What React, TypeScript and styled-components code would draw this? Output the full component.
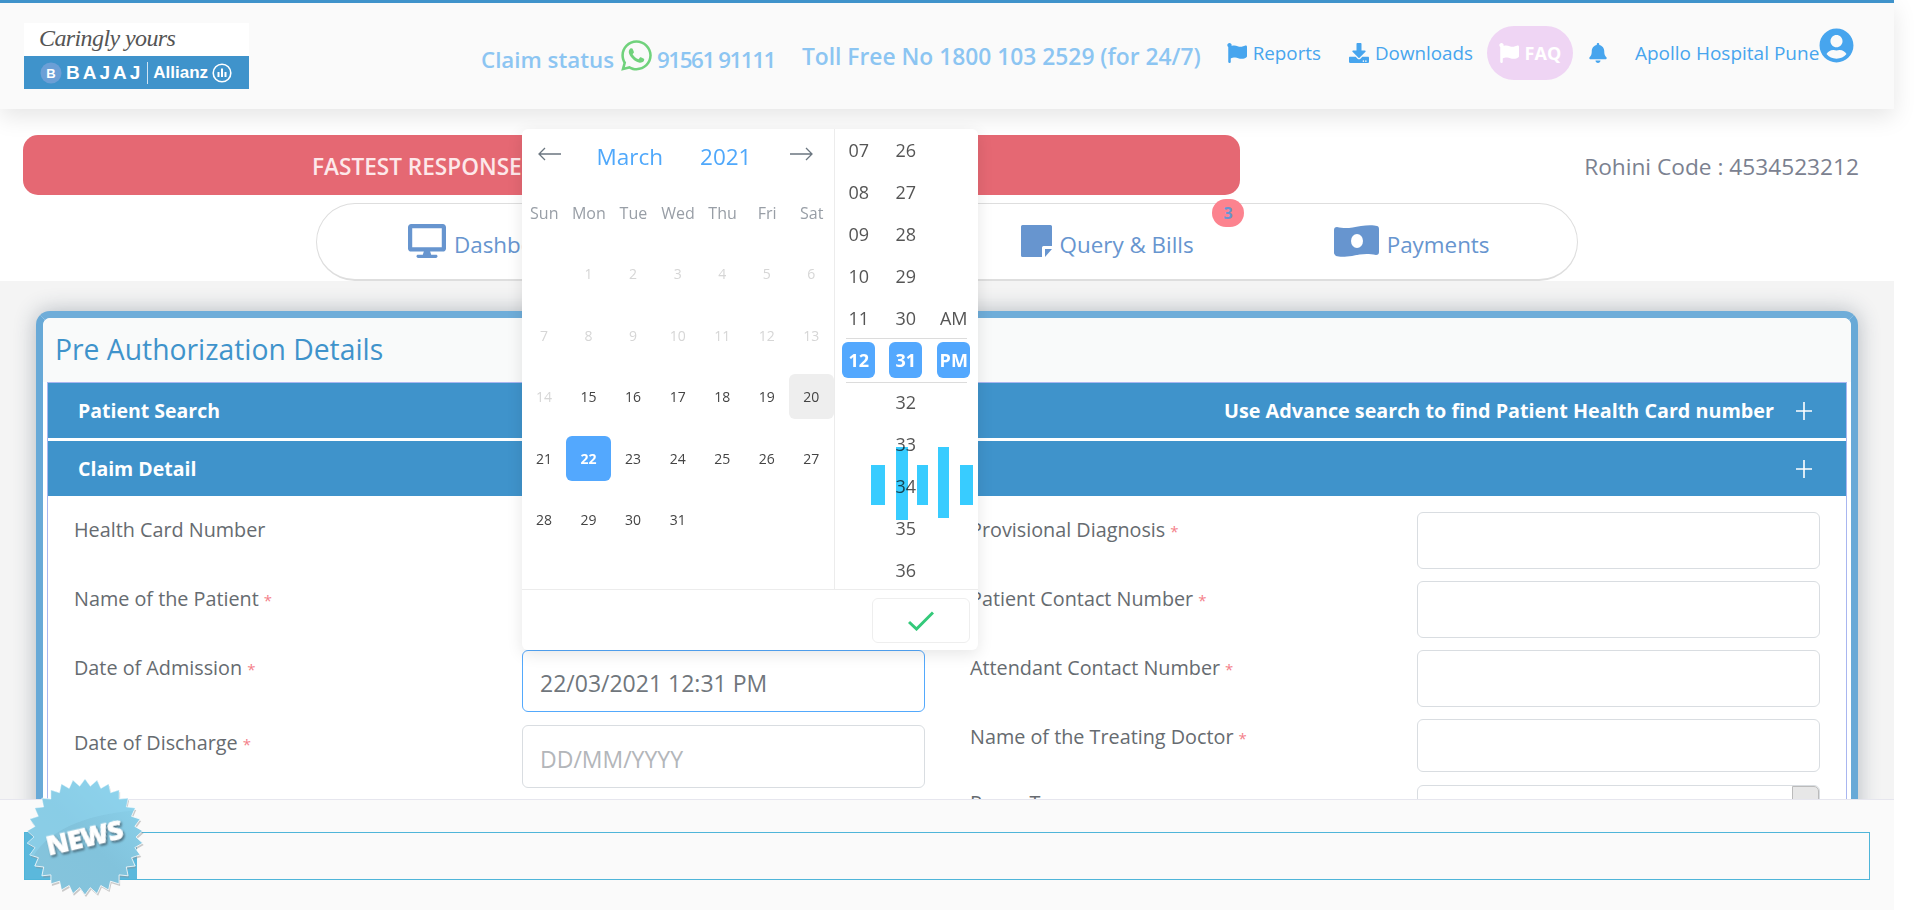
import React from "react";
import styled, { createGlobalStyle } from "styled-components";
import {
  FaBell,
  FaDesktop,
  FaDownload,
  FaFlag,
  FaUserCircle,
  FaWhatsapp,
} from "react-icons/fa";

const GlobalStyle = createGlobalStyle`
  html, body {
    margin: 0;
    height: 910px;
    overflow: hidden;
    background: #fff;
    font-family: "Open Sans", "Noto Sans", sans-serif;
  }
  * { box-sizing: border-box; }
`;

const Page = styled.div`
  position: relative;
  width: 1894px;
  height: 910px;
  overflow: visible;
`;

/* ---------- header ---------- */
const Header = styled.header`
  position: relative;
  z-index: 2;
  display: flex;
  height: 109px;
  padding: 20px 0 0 24px;
  background: #fafafa;
  border-top: 3px solid #3f93cb;
  box-shadow: 0 8px 22px rgba(0, 0, 0, 0.1);
`;

const Logo = styled.div`
  display: flex;
  flex-direction: column;
  flex-shrink: 0;
  width: 225px;
  height: 66px;
  background: #fff;
`;

const LogoScript = styled.div`
  height: 33px;
  padding-left: 15px;
  font: italic 24px/30px "Liberation Serif", serif;
  letter-spacing: -0.6px;
  color: #555;
`;

const LogoBar = styled.div`
  display: flex;
  align-items: center;
  height: 33px;
  padding-left: 16px;
  gap: 4px;
  background: #3f93cb;
  color: #fff;
  font-family: "Liberation Sans", sans-serif;
  font-weight: 700;
`;

const LogoBajaj = styled.span`
  font-size: 19px;
  letter-spacing: 3px;
  padding-right: 4px;
  border-right: 1px solid #cfe4f3;
  line-height: 22px;
`;

const LogoAllianz = styled.span`
  font-size: 17px;
  margin-left: 1px;
`;

const ContactText = styled.div<{ $left: number; $top: number; $size: number }>`
  display: flex;
  align-items: center;
  flex-shrink: 0;
  gap: 6px;
  margin-left: ${(p) => p.$left}px;
  margin-top: ${(p) => p.$top}px;
  height: 34px;
  font-size: ${(p) => p.$size}px;
  font-weight: 600;
  color: #8cc5f2;
  white-space: nowrap;
  & svg {
    color: #70d27c;
    font-size: 35px;
    margin-top: -7px;
    margin-left: -1px;
  }
`;

const PhoneNumber = styled.span`
  margin-left: -3px;
  letter-spacing: -1.4px;
`;

const HeaderLink = styled.a<{ $left: number }>`
  display: flex;
  align-items: center;
  flex-shrink: 0;
  gap: 6px;
  margin-left: ${(p) => p.$left}px;
  margin-top: 13px;
  height: 34px;
  font-size: 18.8px;
  color: #47a5ee;
  white-space: nowrap;
  & svg {
    font-size: 20px;
  }
`;

const FaqPill = styled.a`
  display: flex;
  align-items: center;
  justify-content: center;
  flex-shrink: 0;
  gap: 6px;
  width: 86px;
  height: 54px;
  margin-left: 14px;
  margin-top: 3px;
  border-radius: 27px;
  background: #efd5f4;
  color: #fff;
  font-size: 18px;
  font-weight: 700;
  & svg {
    font-size: 20px;
  }
`;

const UserName = styled.a`
  display: flex;
  align-items: flex-start;
  flex-shrink: 0;
  margin-left: 27px;
  margin-top: 5px;
  font-size: 19px;
  line-height: 50px;
  color: #47a5ee;
  white-space: nowrap;
  & svg {
    font-size: 35px;
    margin-top: 0;
  }
`;

/* ---------- top area ---------- */
const TopArea = styled.section`
  height: 172px;
  padding: 26px 35px 0 23px;
  background: #fff;
`;

const AlertRow = styled.div`
  display: flex;
  align-items: center;
  justify-content: space-between;
`;

const AlertBar = styled.div`
  width: 1217px;
  height: 60px;
  padding-left: 289px;
  border-radius: 15px;
  background: #e56873;
  color: #fde8ea;
  font-size: 22.6px;
  font-weight: 600;
  line-height: 63px;
`;

const RohiniCode = styled.div`
  padding-top: 2px;
  font-size: 22.7px;
  color: #7b8190;
`;

const NavPill = styled.nav`
  position: relative;
  display: flex;
  align-items: center;
  gap: 140px;
  width: 1262px;
  height: 78px;
  margin: 8px 0 0 293px;
  padding: 6px 0 0 91px;
  border: 1px solid #dedede;
  border-bottom-width: 2px;
  border-radius: 40px;
  background: #fff;
`;

const NavItem = styled.a`
  display: flex;
  align-items: center;
  gap: 8px;
  font-size: 22.4px;
  color: #6795cf;
  white-space: nowrap;
  & > svg {
    flex-shrink: 0;
    margin-top: -8px;
  }
`;

const DesktopIcon = styled(FaDesktop)`
  font-size: 38px;
`;

const NavSpacer = styled.div`
  width: 171px;
`;

const NavBadge = styled.span`
  position: absolute;
  left: 895px;
  top: -5px;
  width: 32px;
  height: 28px;
  border-radius: 14px;
  background: #fc838f;
  color: #6795cf;
  font-size: 16px;
  font-weight: 700;
  line-height: 28px;
  text-align: center;
`;

/* ---------- main panel ---------- */
const GrayArea = styled.main`
  height: 629px;
  padding: 30px 36px 0;
  background: #f4f4f4;
  overflow: hidden;
`;

const Panel = styled.div`
  width: 1822px;
  height: 640px;
  border: 7px solid #68a9d7;
  border-top-color: #6fadd9;
  border-radius: 14px;
  background: #fff;
  box-shadow: 0 0 22px rgba(40, 60, 80, 0.32);
`;

const PanelTitle = styled.h2`
  margin: 0;
  height: 64px;
  padding: 11px 0 0 12px;
  border-radius: 8px 8px 0 0;
  background: #f9fafa;
  font-size: 28.3px;
  font-weight: 400;
  line-height: 40px;
  color: #3f93cb;
`;

const Accordion = styled.div`
  margin: 0 4px;
  height: 100%;
  border: 1px solid #a9b6f0;
  border-bottom: 0;
  background: #fff;
`;

const AccordionHead = styled.div<{ $gap?: boolean }>`
  display: flex;
  align-items: center;
  justify-content: space-between;
  height: 55px;
  padding: 0 34px 0 30px;
  margin-bottom: ${(p) => (p.$gap ? 3 : 0)}px;
  background: #3f93cb;
  color: #fff;
  font-size: 19.5px;
  font-weight: 700;
`;

const HeadRight = styled.div`
  display: flex;
  align-items: center;
  gap: 22px;
  font-size: 19.75px;
`;

const PlusIcon = styled.svg`
  width: 16px;
  height: 18px;
  stroke: #fff;
  stroke-width: 1.6;
`;

const FormGrid = styled.div`
  display: grid;
  grid-template-columns: 851px 850px;
  column-gap: 45px;
  padding: 16px 26px 0;
`;

const FormColumn = styled.div`
  display: flex;
  flex-direction: column;
`;

const FormRow = styled.div<{ $gap?: number }>`
  display: flex;
  justify-content: space-between;
  margin-bottom: ${(p) => p.$gap ?? 12}px;
`;

const FieldLabel = styled.label`
  font-size: 19.8px;
  line-height: 36px;
  color: #666b70;
`;

const Required = styled.span`
  margin-left: 5px;
  font-size: 15px;
  color: #f47f8a;
`;

const Field = styled.div<{ $h: number; $focus?: boolean; $muted?: boolean }>`
  position: relative;
  width: 403px;
  height: ${(p) => p.$h}px;
  padding-left: 17px;
  border: 1px solid ${(p) => (p.$focus ? "#54a9fc" : "#d9dde1")};
  border-radius: 6px;
  background: #fff;
  font-size: 23px;
  line-height: ${(p) => p.$h + 3}px;
  color: ${(p) => (p.$muted ? "#b3b6ba" : "#70767c")};
`;

const SelectArrow = styled.span`
  position: absolute;
  right: 0;
  top: 0;
  width: 27px;
  height: 100%;
  background: #e7e7e7;
  border: 1px solid #bbb;
  border-radius: 0 5px 5px 0;
`;

/* ---------- date picker ---------- */
const Picker = styled.div`
  position: absolute;
  z-index: 3;
  left: 522px;
  top: 129px;
  width: 456px;
  height: 521px;
  border-radius: 6px;
  background: #fff;
  box-shadow: 0 4px 16px rgba(0, 0, 0, 0.1);
  overflow: hidden;
`;

const PickerBody = styled.div`
  display: flex;
  height: 461px;
  border-bottom: 1px solid #ececec;
`;

const Calendar = styled.div`
  width: 312px;
`;

const CalendarHead = styled.div`
  display: flex;
  align-items: center;
  height: 54px;
  padding: 0 21px 0 16px;
  font-size: 22.5px;
  color: #4fa8fb;
`;

const CalendarTitle = styled.div`
  display: flex;
  flex: 1;
  justify-content: center;
  gap: 37px;
  margin-left: -3px;
`;

const ArrowIcon = styled.svg`
  width: 24px;
  height: 14px;
  margin-top: -4px;
  fill: none;
  stroke: #6b7680;
  stroke-width: 1.3;
`;

const DayGrid = styled.div`
  display: grid;
  grid-template-columns: repeat(7, 44.57px);
  grid-auto-rows: 61.5px;
  margin-left: -0.5px;
`;

const WeekLabel = styled.div`
  display: flex;
  align-items: center;
  justify-content: center;
  height: 60px;
  font-size: 16px;
  color: #989ea6;
`;

const WeekRow = styled.div`
  display: grid;
  grid-template-columns: repeat(7, 44.57px);
`;

const Day = styled.div<{ $state?: "off" | "picked" | "hover" }>`
  display: flex;
  align-items: center;
  justify-content: center;
  width: 45px;
  height: 45px;
  align-self: center;
  border-radius: 6px;
  font-size: 14px;
  font-weight: ${(p) => (p.$state === "picked" ? 700 : 400)};
  color: ${(p) =>
    p.$state === "off" ? "#d6d6d6" : p.$state === "picked" ? "#fff" : "#444"};
  background: ${(p) =>
    p.$state === "picked" ? "#53a8fe" : p.$state === "hover" ? "#eee" : "transparent"};
`;

const TimeColumn = styled.div`
  position: relative;
  display: grid;
  grid-template-columns: 45.5px 48.5px 47.5px;
  grid-auto-rows: 42px;
  width: 144px;
  padding-left: 1px;
  border-left: 1px solid #ececec;
  overflow: hidden;
`;

const TimeCell = styled.div<{ $picked?: boolean }>`
  justify-self: center;
  align-self: center;
  display: flex;
  align-items: center;
  justify-content: center;
  width: 33px;
  height: ${(p) => (p.$picked ? 36 : 42)}px;
  border-radius: 6px;
  font-size: 18px;
  font-weight: ${(p) => (p.$picked ? 700 : 400)};
  color: ${(p) => (p.$picked ? "#fff" : "#555")};
  background: ${(p) => (p.$picked ? "#53a8fe" : "transparent")};
`;

const TimeBand = styled.div`
  position: absolute;
  left: 11px;
  right: 11px;
  top: 209px;
  height: 45px;
  border-top: 1px solid #dcdcdc;
  border-bottom: 1px solid #dcdcdc;
`;

const WaveIcon = styled.svg`
  position: absolute;
  left: 349px;
  top: 318px;
  width: 104px;
  height: 73px;
  fill: #38ccff;
  filter: blur(0.7px);
  mix-blend-mode: multiply;
`;

const PickerFoot = styled.div`
  display: flex;
  justify-content: flex-end;
  padding: 8px 8px 0 0;
`;

const ConfirmButton = styled.button`
  display: flex;
  align-items: center;
  justify-content: center;
  width: 98px;
  height: 45px;
  border: 1px solid #eee;
  border-radius: 6px;
  background: #fff;
`;

/* ---------- news footer ---------- */
const NewsFooter = styled.footer`
  position: absolute;
  z-index: 4;
  left: 0;
  right: 0;
  bottom: 0;
  height: 111px;
  padding: 32px 24px 0;
  background: #fafafa;
  border-top: 1px solid #e6e6ee;
`;

const NewsBox = styled.div`
  width: 1846px;
  height: 48px;
  border: 1px solid #4fb5d9;
  background: #fafafa;
`;

const NewsTab = styled.div`
  width: 112px;
  height: 100%;
  background: #5bb8dc;
`;

const NewsBadge = styled.svg`
  position: absolute;
  left: 25px;
  top: -23px;
  width: 120px;
  height: 120px;
`;

const NewsWord = styled.text`
  font-family: "Open Sans", sans-serif;
  font-size: 27px;
  font-weight: 800;
  fill: #fff;
  stroke: #fff;
  stroke-width: 0.6;
  letter-spacing: -1px;
  filter: drop-shadow(1px 2px 1px rgba(50, 75, 90, 0.75));
`;

const starPoints = (() => {
  const pts: string[] = [];
  const n = 30;
  for (let i = 0; i < n * 2; i++) {
    const r = i % 2 === 0 ? 58 : 51;
    const a = (Math.PI * i) / n - Math.PI / 2;
    pts.push(`${(60 + r * Math.cos(a)).toFixed(1)},${(60 + r * Math.sin(a)).toFixed(1)}`);
  }
  return pts.join(" ");
})();

const weekDays = ["Sun", "Mon", "Tue", "Wed", "Thu", "Fri", "Sat"];

const dayState = (d: number): "off" | "picked" | "hover" | undefined => {
  if (d <= 14) return "off";
  if (d === 20) return "hover";
  if (d === 22) return "picked";
  return undefined;
};

const hours = ["07", "08", "09", "10", "11", "12"];
const minutes = Array.from({ length: 11 }, (_, i) => String(26 + i));

const MoneyIcon = () => (
  <svg width="45" height="32" viewBox="0 0 45 32">
    <path
      fill="#6795cf"
      d="M0 5c0-2 1-3 3-3 8 2 14 1 24-1 6-1 13-1 16 0 1 0 2 1 2 3v23c0 2-1 3-3 3-9-2-15-1-24 1-7 1-13 1-16 0-1-1-2-2-2-3z"
    />
    <ellipse cx="23" cy="16" rx="6" ry="7" fill="#fff" />
  </svg>
);

const NoteIcon = () => (
  <svg width="31" height="32" viewBox="0 0 31 32">
    <path
      fill="#6795cf"
      d="M1.500 0h28A1.500 1.500 0 0 1 31 1.500V21h-8.500a1.500 1.500 0 0 0-1.500 1.500V32H1.500A1.500 1.500 0 0 1 0 30.500V1.500A1.500 1.500 0 0 1 1.500 0z"
    />
    <path fill="#6795cf" d="M24 24h7l-7 8z" />
  </svg>
);

const Plus = () => (
  <PlusIcon viewBox="0 0 16 18">
    <path d="M8 0v18M0 9h16" />
  </PlusIcon>
);

const Label = ({ text, req }: { text: string; req?: boolean }) => (
  <FieldLabel>
    {text}
    {req && <Required>*</Required>}
  </FieldLabel>
);

export default function App() {
  return (
    <Page>
      <GlobalStyle />
      <Header>
        <Logo>
          <LogoScript>Caringly yours</LogoScript>
          <LogoBar>
            <svg width="22" height="22" viewBox="0 0 22 22">
              <circle cx="11" cy="11" r="10.500" fill="#6c9fd6" />
              <text x="11" y="16" fontSize="13" fontWeight="700" fill="#fff" textAnchor="middle">
                B
              </text>
            </svg>
            <LogoBajaj>BAJAJ</LogoBajaj>
            <LogoAllianz>Allianz</LogoAllianz>
            <svg width="20" height="20" viewBox="0 0 20 20">
              <circle cx="10" cy="10" r="8.800" fill="none" stroke="#fff" strokeWidth="1.600" />
              <path d="M5.500 14V9h2v5zM9 14V5.500h2V14zM12.500 14V9h2v5z" fill="#fff" />
            </svg>
          </LogoBar>
        </Logo>
        <ContactText $left={232} $top={19} $size={22.3}>
          Claim status <FaWhatsapp /> <PhoneNumber>91561 91111</PhoneNumber>
        </ContactText>
        <ContactText $left={27} $top={16} $size={22.8}>
          Toll Free No 1800 103 2529 (for 24/7)
        </ContactText>
        <HeaderLink $left={26}>
          <FaFlag /> Reports
        </HeaderLink>
        <HeaderLink $left={28}>
          <FaDownload /> Downloads
        </HeaderLink>
        <FaqPill>
          <FaFlag /> FAQ
        </FaqPill>
        <HeaderLink $left={15}>
          <FaBell />
        </HeaderLink>
        <UserName>
          Apollo Hospital Pune
          <FaUserCircle />
        </UserName>
      </Header>

      <TopArea>
        <AlertRow>
          <AlertBar>FASTEST RESPONSE</AlertBar>
          <RohiniCode>Rohini Code : 4534523212</RohiniCode>
        </AlertRow>
        <NavPill>
          <NavItem>
            <DesktopIcon /> Dashboard
          </NavItem>
          <NavSpacer />
          <NavItem>
            <NoteIcon /> Query &amp; Bills
          </NavItem>
          <NavItem>
            <MoneyIcon /> Payments
          </NavItem>
          <NavBadge>3</NavBadge>
        </NavPill>
      </TopArea>

      <GrayArea>
        <Panel>
          <PanelTitle>Pre Authorization Details</PanelTitle>
          <Accordion>
            <AccordionHead $gap>
              Patient Search
              <HeadRight>
                Use Advance search to find Patient Health Card number
                <Plus />
              </HeadRight>
            </AccordionHead>
            <AccordionHead>
              Claim Detail
              <Plus />
            </AccordionHead>
            <FormGrid>
              <FormColumn>
                <FormRow>
                  <Label text="Health Card Number" />
                  <Field $h={57} />
                </FormRow>
                <FormRow>
                  <Label text="Name of the Patient" req />
                  <Field $h={57} />
                </FormRow>
                <FormRow $gap={13}>
                  <Label text="Date of Admission" req />
                  <Field $h={62} $focus>
                    22/03/2021 12:31 PM
                  </Field>
                </FormRow>
                <FormRow>
                  <Label text="Date of Discharge" req />
                  <Field $h={63} $muted>
                    DD/MM/YYYY
                  </Field>
                </FormRow>
              </FormColumn>
              <FormColumn>
                <FormRow>
                  <Label text="Provisional Diagnosis" req />
                  <Field $h={57} />
                </FormRow>
                <FormRow>
                  <Label text="Patient Contact Number" req />
                  <Field $h={57} />
                </FormRow>
                <FormRow>
                  <Label text="Attendant Contact Number" req />
                  <Field $h={57} />
                </FormRow>
                <FormRow $gap={13}>
                  <Label text="Name of the Treating Doctor" req />
                  <Field $h={53} />
                </FormRow>
                <FormRow>
                  <Label text="Room Type" req />
                  <Field $h={53}>
                    <SelectArrow />
                  </Field>
                </FormRow>
              </FormColumn>
            </FormGrid>
          </Accordion>
        </Panel>
      </GrayArea>

      <Picker>
        <PickerBody>
          <Calendar>
            <CalendarHead>
              <ArrowIcon viewBox="0 0 24 14">
                <path d="M23 7H1M7 1 1 7l6 6" />
              </ArrowIcon>
              <CalendarTitle>
                <span>March</span>
                <span>2021</span>
              </CalendarTitle>
              <ArrowIcon viewBox="0 0 24 14">
                <path d="M1 7h22M17 1l6 6-6 6" />
              </ArrowIcon>
            </CalendarHead>
            <WeekRow>
              {weekDays.map((d) => (
                <WeekLabel key={d}>{d}</WeekLabel>
              ))}
            </WeekRow>
            <DayGrid>
              <span />
              {Array.from({ length: 31 }, (_, i) => i + 1).map((d) => (
                <Day key={d} $state={dayState(d)}>
                  {d}
                </Day>
              ))}
            </DayGrid>
          </Calendar>
          <TimeColumn>
            <TimeBand />
            {minutes.map((m, i) => (
              <React.Fragment key={m}>
                <TimeCell $picked={i === 5}>{hours[i]}</TimeCell>
                <TimeCell $picked={i === 5}>{m}</TimeCell>
                <TimeCell $picked={i === 5}>{i === 4 ? "AM" : i === 5 ? "PM" : ""}</TimeCell>
              </React.Fragment>
            ))}
          </TimeColumn>
        </PickerBody>
        <PickerFoot>
          <ConfirmButton>
            <svg width="26" height="20" viewBox="0 0 26 20">
              <path d="M1 11l7.500 7L25 1.500" fill="none" stroke="#34c97a" strokeWidth="3" />
            </svg>
          </ConfirmButton>
        </PickerFoot>
        <WaveIcon viewBox="0 0 104 73">
          <rect x="0" y="18" width="14" height="40" />
          <rect x="25" y="0" width="12" height="73" />
          <rect x="46" y="18" width="11" height="40" />
          <rect x="67" y="0" width="11" height="71" />
          <rect x="89" y="18" width="13" height="40" />
        </WaveIcon>
      </Picker>

      <NewsFooter>
        <NewsBox>
          <NewsTab />
        </NewsBox>
        <NewsBadge viewBox="0 0 120 120">
          <defs>
            <linearGradient id="newsFill" x1="0" y1="1" x2="1" y2="0">
              <stop offset="0" stopColor="#86c4dc" />
              <stop offset="0.5" stopColor="#82c3dc" />
              <stop offset="1" stopColor="#8cd4ee" />
            </linearGradient>
            <clipPath id="newsClip">
              <polygon points={starPoints} />
            </clipPath>
          </defs>
          <polygon points={starPoints} fill="#8d8d8d" opacity="0.45" transform="translate(1 2)" />
          <polygon points={starPoints} fill="url(#newsFill)" stroke="#fff" strokeWidth="0.800" />
          <path
            clipPath="url(#newsClip)"
            d="M8 80C25 50 70 35 120 33V0H0v90z"
            fill="#8fd6ef"
            opacity="0.55"
          />
          <NewsWord x="59" y="70" textAnchor="middle" transform="rotate(-13 60 60)">
            NEWS
          </NewsWord>
        </NewsBadge>
      </NewsFooter>
    </Page>
  );
}
